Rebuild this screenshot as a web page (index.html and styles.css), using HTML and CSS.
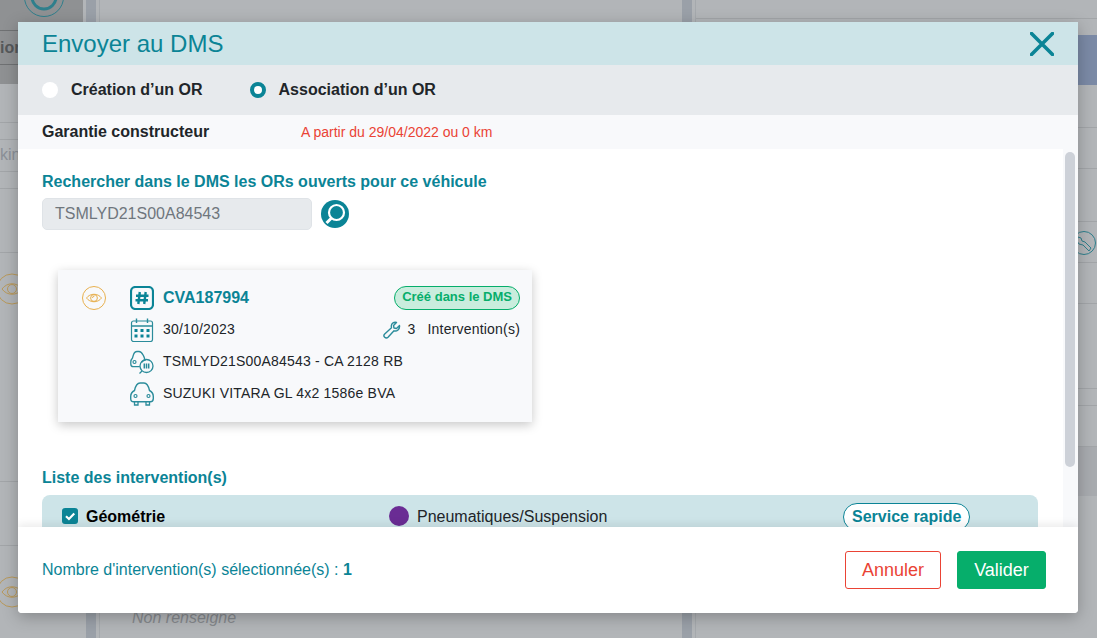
FILE: index.html
```html
<!DOCTYPE html>
<html lang="fr">
<head>
  <meta charset="UTF-8">
  <title>Envoyer au DMS</title>
  <meta name="viewport" content="width=device-width, initial-scale=1.0">
  <link rel="stylesheet" href="styles.css">
</head>
<body>
<div class="page">
  <div class="side">
    <div class="side-head">
      <svg class="side-logo" viewBox="0 0 40 40"><circle cx="20" cy="20" r="19.5" fill="none" stroke="#2f7f8c"/><circle cx="20" cy="20" r="12" fill="none" stroke="#2f7f8c" stroke-width="3"/></svg>
      <div class="side-tab">ion</div>
    </div>
    <div class="side-row h39"></div>
    <div class="side-row h17"></div>
    <div class="side-row h32 side-text">kin</div>
    <div class="side-row h17"></div>
    <div class="side-row h64"></div>
    <div class="side-row side-eye first">
      <svg class="bg-eye" viewBox="0 0 40 40"><circle cx="14" cy="20" r="15" fill="none" stroke="#b9995a"/><path d="M4 20c5-7 15-7 20 0-5 7-15 7-20 0z" fill="none" stroke="#b9995a"/><circle cx="14" cy="20" r="4.500" fill="none" stroke="#b9995a"/></svg>
    </div>
    <div class="side-row h64"></div>
    <div class="side-eye last">
      <svg class="bg-eye" viewBox="0 0 40 40"><circle cx="14" cy="20" r="15" fill="none" stroke="#b9995a"/><path d="M4 20c5-7 15-7 20 0-5 7-15 7-20 0z" fill="none" stroke="#b9995a"/><circle cx="14" cy="20" r="4.500" fill="none" stroke="#b9995a"/></svg>
    </div>
  </div>
  <div class="gutter"></div>
  <div class="center">
    <div class="center-note">Non renseigné</div>
  </div>
  <div class="gutter"></div>
  <div class="right">
    <div class="right-line h19"></div>
    <div class="right-blue-wrap"><div class="right-blue"></div></div>
    <div class="right-line h43"></div>
    <div class="right-line h41"></div>
    <div class="right-line h53"></div>
    <div class="right-tool">
      <svg class="bg-tool" viewBox="0 0 24 24"><circle cx="12" cy="12" r="11.500" fill="none" stroke="#2f7f8c"/><path d="M6 6l3 1 1 3 3 1 6 6-2 3-6-6-4-1-2-3z" fill="none" stroke="#2f7f8c"/></svg>
    </div>
    <div class="right-line h41"></div>
    <div class="right-line h41"></div>
    <div class="right-line h85"></div>
    <div class="right-line h17"></div>
    <div class="right-line h41"></div>
    <div class="right-band"></div>
  </div>
</div>

<div class="modal">
  <div class="modal-head">
    <span class="modal-title">Envoyer au DMS</span>
    <svg class="close-icon" viewBox="0 0 24 24"><path d="M1.500 1.500l21 21M22.500 1.500l-21 21" stroke="#0b8496" stroke-width="3.600" stroke-linecap="round"/></svg>
  </div>

  <div class="mode-bar">
    <label class="radio"><span class="radio-dot"></span>Création d’un OR</label>
    <label class="radio"><span class="radio-dot checked"></span>Association d’un OR</label>
  </div>

  <div class="warranty">
    <span class="warranty-label">Garantie constructeur</span>
    <span class="warranty-value">A partir du 29/04/2022 ou 0 km</span>
  </div>

  <div class="modal-body">
    <div class="scroll-area">
      <div class="section-title">Rechercher dans le DMS les ORs ouverts pour ce véhicule</div>
      <div class="search">
        <div class="search-input">TSMLYD21S00A84543</div>
        <svg class="search-btn" viewBox="0 0 28 28"><circle cx="14" cy="14" r="14" fill="#0b8496"/><circle cx="15.500" cy="12.500" r="7.500" fill="#0b8496" stroke="#fff" stroke-width="2.200"/><path d="M10.500 18L5.500 23" stroke="#fff" stroke-width="3"/></svg>
      </div>

      <div class="card">
        <svg class="card-eye" viewBox="0 0 24 24"><circle cx="12" cy="12" r="11.500" fill="none" stroke="#e8b04e"/><path d="M4.500 12c3.500-5 11.500-5 15 0-3.500 5-11.500 5-15 0z" fill="none" stroke="#e8b04e"/><circle cx="12" cy="12" r="3.400" fill="none" stroke="#e8b04e"/><path d="M10.500 12a2 2 0 0 1 2-2" fill="none" stroke="#e8b04e"/></svg>
        <div class="card-main">
          <div class="card-row">
            <svg class="row-icon" viewBox="0 0 24 24"><rect x="1" y="1" width="22" height="22" rx="4.500" fill="none" stroke="#0b8496" stroke-width="2.200"/><path d="M9.800 6l-1.500 12M15.700 6l-1.500 12M6 9.800h12.500M5.500 14.200h12.500" fill="none" stroke="#0b8496" stroke-width="2.400"/></svg>
            <span class="or-number">CVA187994</span>
            <span class="badge">Créé dans le DMS</span>
          </div>
          <div class="card-row">
            <svg class="row-icon" viewBox="0 0 24 24"><rect x="1.500" y="3" width="21" height="20.500" rx="2" fill="none" stroke="#2b8c9b" stroke-width="1.200"/><path d="M1.500 8h21M6.500 0.500v4.500M17.500 0.500v4.500" fill="none" stroke="#2b8c9b" stroke-width="1.400"/><path d="M4.500 11h3v3h-3zM10.500 11h3v3h-3zM16.500 11h3v3h-3zM4.500 16.500h3v3h-3zM10.500 16.500h3v3h-3zM16.500 16.500h3v3h-3z" fill="#0b8496"/></svg>
            <span class="row-text">30/10/2023</span>
            <span class="count row-text">
              <svg class="wrench" viewBox="0 0 18 18"><path d="M16.500 4.500l-3 3-2.500-.5-.5-2.500 3-3c-2.500-.8-5 .8-5.200 3.300 0 1 .1 1.500.2 2L1.700 13a2.300 2.300 0 0 0 3.300 3.300L11 9.800c2.800 1 6-1.500 5.500-5.300z" fill="none" stroke="#2b8c9b" stroke-width="1.400" stroke-linejoin="round"/></svg>
              <span class="count-num">3</span>Intervention(s)
            </span>
          </div>
          <div class="card-row">
            <svg class="row-icon" viewBox="0 0 24 24"><path d="M11.500 12.500c.8-1 1.800-1.800 3.500-2.300-.5-2-1-3.700-1.800-5C12 3 11 1.500 9 1.500H7c-2 0-3 1.500-3.700 3.700L2.500 8C1.500 9 .8 10.500 .8 12v2c0 1.500 1 2.700 2.500 2.700h6.500" fill="none" stroke="#2b8c9b" stroke-width="1.300"/><circle cx="4.500" cy="12" r="1.500" fill="none" stroke="#2b8c9b" stroke-width="1.200"/><circle cx="16.500" cy="16" r="6.500" fill="none" stroke="#2b8c9b" stroke-width="1.300"/><path d="M14.300 13.500v5M16.500 13.500v5M18.700 13.500v5" stroke="#2b8c9b" stroke-width="1.500"/><path d="M12 21l-2.500 2.500" stroke="#2b8c9b" stroke-width="1.300"/></svg>
            <span class="row-text">TSMLYD21S00A84543 - CA 2128 RB</span>
          </div>
          <div class="card-row">
            <svg class="row-icon" viewBox="0 0 24 24"><path d="M4.500 8.500C5.500 4 6.500 1 10 1h4c3.500 0 4.500 3 5.500 7.500 2 1 3.800 3 3.800 6v2c0 2-1 3.300-3 3.300H3.700c-2 0-3-1.300-3-3.300v-2c0-3 1.800-5 3.800-6z" fill="none" stroke="#2b8c9b" stroke-width="1.400"/><circle cx="5.500" cy="14" r="1.500" fill="none" stroke="#2b8c9b" stroke-width="1.200"/><circle cx="18.500" cy="14" r="1.500" fill="none" stroke="#2b8c9b" stroke-width="1.200"/><path d="M4.500 20v3h3.500v-3M16 20v3h3.500v-3" fill="none" stroke="#2b8c9b" stroke-width="1.300"/></svg>
            <span class="row-text">SUZUKI VITARA GL 4x2 1586e BVA</span>
          </div>
        </div>
      </div>

      <div class="section-title list-title">Liste des intervention(s)</div>
      <div class="intervention">
        <div class="intervention-name">
          <span class="check"><svg viewBox="0 0 12 12"><path d="M3 6.200l2.200 2.100 4-4.200" fill="none" stroke="#fff" stroke-width="1.600"/></svg></span>
          <span class="cell-text">Géométrie</span>
        </div>
        <div class="intervention-cat"><span class="cat-dot"></span><span class="cell-text">Pneumatiques/Suspension</span></div>
        <span class="pill">Service rapide</span>
      </div>
    </div>
    <div class="scrollbar"><div class="thumb"></div></div>
  </div>

  <div class="modal-foot">
    <div class="selected">Nombre d'intervention(s) sélectionnée(s) : <b>1</b></div>
    <div class="foot-actions">
      <button class="btn btn-cancel">Annuler</button>
      <button class="btn btn-ok">Valider</button>
    </div>
  </div>
</div>
</body>
</html>
```

FILE: styles.css
```css
html, body {
  margin: 0;
  padding: 0;
  height: 100%;
  overflow: hidden;
  font-family: 'Liberation Sans', Arial, sans-serif;
  color: #212529;
  background: #b2b5b8;
}

/* page behind the overlay */
.page {
  display: flex;
  height: 638px;
  overflow: hidden;
  background: #b2b5b8;
}
.side {
  width: 86px;
  flex-shrink: 0;
}
.side-head {
  display: flow-root;
  width: 83px;
  height: 84px;
  background: #8f9193;
}
.side-logo {
  display: block;
  width: 40px;
  height: 40px;
  margin: -23px 0 0 24px;
}
.side-tab {
  height: 33px;
  margin-top: 13px;
  border-top: 1px solid #6f7173;
  border-bottom: 1px solid #6f7173;
  font-size: 16px;
  font-weight: bold;
  line-height: 33px;
  color: #55585a;
}
.side-row {
  border-bottom: 1px solid #a2a5a8;
}
.side-text {
  font-size: 16px;
  line-height: 30px;
  color: #8b9097;
}
.h17 { height: 16px; }
.h19 { height: 18px; }
.h32 { height: 31px; }
.h39 { height: 38px; }
.h41 { height: 40px; }
.h43 { height: 42px; }
.h53 { height: 52px; }
.h64 { height: 63px; }
.h85 { height: 84px; }
.side-eye.first {
  height: 212px;
  padding-top: 16px;
}
.side-eye.last {
  padding-top: 26px;
}
.bg-eye {
  display: block;
  width: 40px;
  height: 40px;
  margin-left: -2px;
}
.gutter {
  width: 10px;
  margin-right: 3px;
  background: #9aa0a8;
  flex-shrink: 0;
}
.center {
  width: 582px;
  flex-shrink: 0;
  border-left: 1px solid #a5a9ad;
  display: flex;
  flex-direction: column;
  justify-content: flex-end;
}
.center-note {
  padding: 0 0 11px 32px;
  font-size: 16px;
  font-style: italic;
  color: #85888c;
}
.right {
  flex: 1;
  border-left: 1px solid #a5a9ad;
}
.right-line {
  border-bottom: 1px solid #a2a5a8;
}
.right-blue-wrap {
  height: 50px;
  margin-top: 16px;
  display: flex;
  justify-content: flex-end;
}
.right-blue {
  width: 19px;
  background: #7b8aa6;
}
.right-tool {
  height: 0;
  display: flex;
  justify-content: flex-end;
}
.bg-tool {
  flex-shrink: 0;
  width: 24px;
  height: 24px;
  margin: 9px 1px 0 0;
}
.right-band {
  height: 49px;
  background: #a8abaf;
}

/* modal */
.modal {
  position: absolute;
  left: 18px;
  top: 22px;
  width: 1060px;
  height: 591px;
  display: flex;
  flex-direction: column;
  background: #fff;
  border-radius: 0 0 4px 4px;
  box-shadow: 0 4px 16px rgba(0, 0, 0, 0.25);
  overflow: hidden;
}
.modal-head {
  height: 43px;
  flex-shrink: 0;
  display: flex;
  align-items: center;
  justify-content: space-between;
  padding: 0 24px;
  background: #cde4e8;
}
.modal-title {
  font-size: 24px;
  color: #0b8496;
}
.close-icon {
  width: 24px;
  height: 24px;
}
.mode-bar {
  height: 50px;
  flex-shrink: 0;
  display: flex;
  align-items: center;
  gap: 47px;
  padding-left: 24px;
  background: #e7eaed;
}
.radio {
  display: flex;
  align-items: center;
  gap: 13px;
  font-size: 16px;
  font-weight: bold;
}
.radio-dot {
  width: 16px;
  height: 16px;
  border-radius: 50%;
  background: #fff;
  box-sizing: border-box;
}
.radio-dot.checked {
  border: 4.5px solid #0b8496;
}
.warranty {
  height: 34px;
  box-sizing: border-box;
  padding: 0 0 1px 24px;
  flex-shrink: 0;
  display: flex;
  align-items: center;
  background: #f8f9fb;
}
.warranty-label {
  width: 259px;
  font-size: 16px;
  font-weight: bold;
}
.warranty-value {
  font-size: 14px;
  color: #ea4335;
}
.modal-body {
  flex: 1;
  min-height: 0;
  display: flex;
}
.scroll-area {
  flex: 1;
  min-width: 0;
  overflow: hidden;
  padding: 24px 25px 0 24px;
}
.scrollbar {
  width: 15px;
  flex-shrink: 0;
  box-sizing: border-box;
  padding: 3px 3px 0 2px;
  background: #f8f9fb;
}
.thumb {
  height: 315px;
  border-radius: 5px;
  background: #cdd1d8;
}
.section-title {
  font-size: 16px;
  font-weight: bold;
  line-height: 18px;
  color: #0b8496;
}
.search {
  display: flex;
  align-items: center;
  gap: 9px;
  margin-top: 7px;
}
.search-input {
  width: 270px;
  height: 32px;
  box-sizing: border-box;
  padding-left: 12px;
  font-size: 16px;
  line-height: 29px;
  color: #6f767d;
  background: #e7eaed;
  border: 1px solid #dfe3e7;
  border-radius: 5px;
}
.search-btn {
  width: 28px;
  height: 28px;
}
.card {
  display: flex;
  align-items: flex-start;
  gap: 24px;
  width: 474px;
  height: 152px;
  box-sizing: border-box;
  margin: 40px 0 0 16px;
  padding: 16px 12px 0 24px;
  background: #f8f9fb;
  box-shadow: 0 3px 10px rgba(0, 0, 0, 0.22);
}
.card-eye {
  width: 24px;
  height: 24px;
  flex-shrink: 0;
}
.card-main {
  flex: 1;
}
.card-row {
  display: flex;
  align-items: center;
  gap: 9px;
  height: 24px;
  margin-bottom: 8px;
  font-size: 14px;
  letter-spacing: 0.2px;
  line-height: 22px;
}
.row-text {
  padding-bottom: 2px;
}
.row-icon {
  width: 24px;
  height: 24px;
  flex-shrink: 0;
}
.or-number {
  font-size: 16px;
  font-weight: bold;
  letter-spacing: 0;
  color: #0b8496;
}
.badge {
  margin-left: auto;
  padding: 0 7px;
  height: 22px;
  font-size: 13px;
  font-weight: bold;
  letter-spacing: 0;
  line-height: 20px;
  color: #06ae6b;
  background: #c9eddd;
  border: 1px solid #06ae6b;
  border-radius: 12px;
}
.count {
  display: flex;
  align-items: center;
  margin-left: auto;
}
.wrench {
  width: 18px;
  height: 18px;
  margin: 2px 7px 0 0;
}
.count-num {
  margin-right: 12px;
}
.list-title {
  margin-top: 47px;
}
.intervention {
  display: flex;
  align-items: flex-start;
  height: 44px;
  box-sizing: border-box;
  margin-top: 8px;
  padding: 8px 0 0 20px;
  background: #cde4e8;
  border-radius: 8px 8px 0 0;
  font-size: 16px;
}
.intervention-name {
  width: 327px;
  display: flex;
  align-items: center;
  gap: 8px;
  height: 26px;
  font-weight: bold;
  color: #000;
}
.cell-text {
  padding-top: 2px;
}
.check {
  width: 16px;
  height: 16px;
  display: flex;
  background: #0b8496;
  border-radius: 3px;
}
.intervention-cat {
  width: 454px;
  display: flex;
  align-items: center;
  gap: 8px;
  height: 26px;
}
.cat-dot {
  width: 20px;
  height: 20px;
  border-radius: 50%;
  background: #6a2c94;
}
.pill {
  height: 26px;
  padding: 0 8px;
  font-weight: bold;
  line-height: 26px;
  color: #0b8496;
  background: #fff;
  border: 1px solid #0b8496;
  border-radius: 14px;
}
.modal-foot {
  height: 86px;
  flex-shrink: 0;
  position: relative;
  display: flex;
  align-items: center;
  justify-content: space-between;
  padding: 0 32px 0 24px;
  background: #fff;
  box-shadow: 0 -3px 8px rgba(0, 0, 0, 0.08);
}
.selected {
  font-size: 16px;
  color: #0b8496;
}
.foot-actions {
  display: flex;
  gap: 16px;
}
.btn {
  height: 38px;
  box-sizing: border-box;
  font-family: inherit;
  font-size: 18px;
  border-radius: 3px;
}
.btn-cancel {
  width: 96px;
  color: #ea4335;
  background: #fff;
  border: 1px solid #ea4335;
}
.btn-ok {
  width: 89px;
  color: #fff;
  background: #06ae6b;
  border: 1px solid #06ae6b;
}
```
